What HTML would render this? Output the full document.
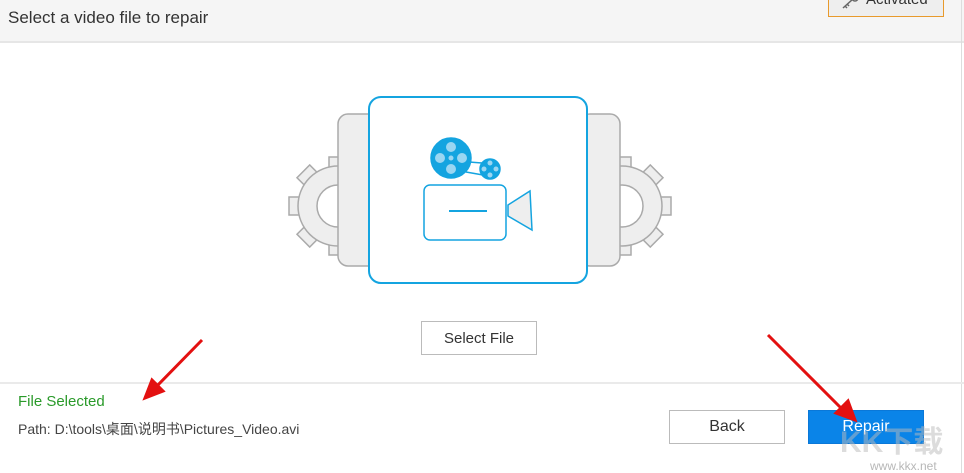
<!DOCTYPE html>
<html><head><meta charset="utf-8"><style>
body{margin:0;width:964px;height:473px;background:#fff;font-family:"Liberation Sans","Noto Sans CJK SC",sans-serif;position:relative;overflow:hidden}
.hdr{position:absolute;left:0;top:0;width:964px;height:41px;background:#f5f5f5;border-bottom:2px solid #e6e6e6}
.hdr .t{position:absolute;left:8px;top:8px;font-size:17px;color:#333}
.act{position:absolute;left:828px;top:-6px;width:114px;height:21px;border:1px solid #e89a2c;background:#eee;font-size:15px;color:#333}
.act span{position:absolute;left:37px;top:-4px}
.sep{position:absolute;left:0;top:382px;width:964px;height:2px;background:#eaeaea}
.btn{position:absolute;box-sizing:border-box;font-size:16px;text-align:center}
.fs{position:absolute;left:18px;top:393px;font-size:15px;color:#2a9a2a}
.path{position:absolute;left:18px;top:419px;font-size:14px;color:#444}
.rb{position:absolute;right:2px;top:0;width:1px;height:473px;background:#ddd}
</style></head><body>
<div class="hdr"><div class="t">Select a video file to repair</div>
<div class="act"><svg style="position:absolute;left:12px;top:0" width="20" height="14"><path d="M2 13 L12 4 M4 11 l2 2 M6 9 l2 2" stroke="#666" stroke-width="1.5" fill="none"/><circle cx="14" cy="3" r="3" stroke="#666" fill="none" stroke-width="1.5"/></svg><span>Activated</span></div></div>
<div class="rb"></div>
<svg style="position:absolute;left:280px;top:90px" width="400" height="200">
<defs>
<g id="gear" fill="#eee" stroke="#aaa" stroke-width="1.5">
<rect x="-9" y="-49" width="18" height="12"/>
<rect x="-9" y="-49" width="18" height="12" transform="rotate(45)"/>
<rect x="-9" y="-49" width="18" height="12" transform="rotate(90)"/>
<rect x="-9" y="-49" width="18" height="12" transform="rotate(135)"/>
<rect x="-9" y="-49" width="18" height="12" transform="rotate(180)"/>
<rect x="-9" y="-49" width="18" height="12" transform="rotate(225)"/>
<rect x="-9" y="-49" width="18" height="12" transform="rotate(270)"/>
<rect x="-9" y="-49" width="18" height="12" transform="rotate(315)"/>
<circle r="40"/>
<circle r="21" fill="#fff"/>
</g>
</defs>
<use href="#gear" x="58" y="116"/>
<use href="#gear" x="342" y="116"/>
<g fill="#eee" stroke="#aaa" stroke-width="1.5">
<rect x="58" y="24" width="40" height="152" rx="10"/>
<rect x="300" y="24" width="40" height="152" rx="10"/>
</g>
<rect x="89" y="7" width="218" height="186" rx="12" fill="#fff" stroke="#14a4e0" stroke-width="2"/>
<g stroke="#14a4e0" stroke-width="1.5">
<circle cx="171" cy="68" r="20" fill="#14a4e0"/>
<circle cx="210" cy="79" r="10" fill="#14a4e0"/>
<path d="M189 72 L202 73 M186 82 L203 85" fill="none"/>
<rect x="144" y="95" width="82" height="55" rx="6" fill="#fff"/>
<path d="M228 115 L250 101 L252 140 L228 126Z" fill="#eee"/>
<path d="M169 121 L207 121" stroke-width="2"/>
</g>
<g fill="#9ad6f2"><circle cx="171" cy="57" r="5"/><circle cx="171" cy="79" r="5"/><circle cx="160" cy="68" r="5"/><circle cx="182" cy="68" r="5"/><circle cx="171" cy="68" r="2.5"/>
<circle cx="210" cy="73" r="2.5"/><circle cx="210" cy="85" r="2.5"/><circle cx="204" cy="79" r="2.5"/><circle cx="216" cy="79" r="2.5"/></g>
</svg>
<div class="btn" style="left:421px;top:321px;width:116px;height:34px;border:1px solid #bbb;line-height:34px;color:#333;font-size:15px">Select File</div>
<div class="sep"></div>
<div class="fs">File Selected</div>
<div class="path">Path: D:\tools\桌面\说明书\Pictures_Video.avi</div>
<div class="btn" style="left:669px;top:410px;width:116px;height:34px;border:1px solid #bbb;line-height:32px;color:#333">Back</div>
<div class="btn" style="left:808px;top:410px;width:116px;height:34px;background:#0a84e8;border:1px solid #0a78d8;line-height:32px;color:#fff">Repair</div>
<svg style="position:absolute;left:0;top:0" width="964" height="473">
<g stroke="#e31010" stroke-width="3" fill="#e31010">
<path d="M202 340 L155 388"/><path d="M145 398 L152 380 L163 391Z"/>
<path d="M768 335 L845 412"/><path d="M855 420 L836 413 L848 401Z"/>
</g>
<text x="840" y="452" font-size="30" font-weight="bold" fill="#bbb" opacity="0.5">KK下载</text>
<text x="870" y="470" font-size="12" fill="#999" opacity="0.7">www.kkx.net</text>
</svg>
</body></html>
